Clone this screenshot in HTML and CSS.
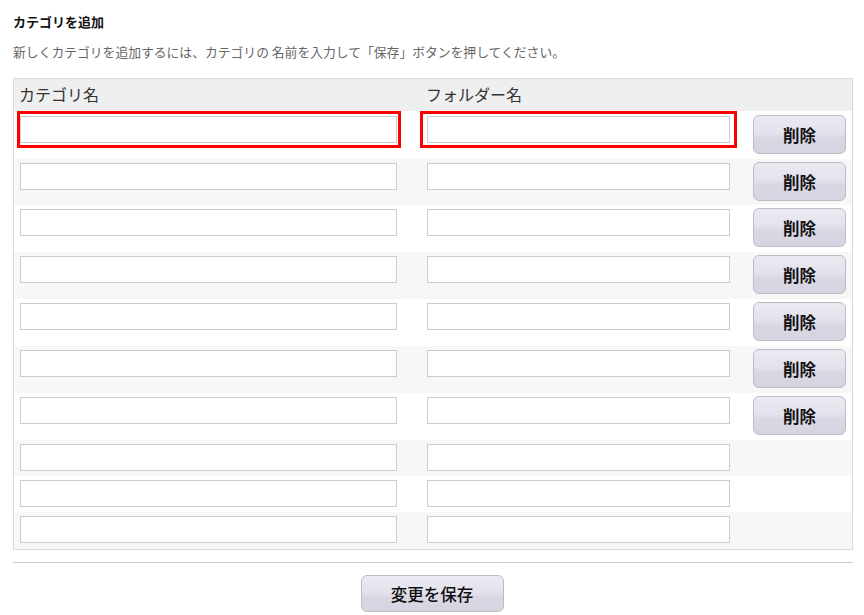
FILE: index.html
```html
<!DOCTYPE html>
<html lang="ja">
<head>
<meta charset="utf-8">
<title>カテゴリを追加</title>
<link rel="stylesheet" href="styles.css">
</head>
<body>
<div class="page">
  <h1 class="title">カテゴリを追加</h1>
  <p class="desc">新しくカテゴリを追加するには、カテゴリの 名前を入力して「保存」ボタンを押してください。</p>
  <div class="table">
    <div class="head">
      <div class="hcell c1">カテゴリ名</div>
      <div class="hcell c2">フォルダー名</div>
      <div class="hcell c3"></div>
    </div>
    <div class="row r-first">
      <div class="cell c1"><span class="hl hl1"><input class="field f1" type="text"></span></div>
      <div class="cell c2"><span class="hl hl2"><input class="field f2" type="text"></span></div>
      <div class="cell c3"><button class="btn del">削除</button></div>
    </div>
    <div class="row alt r-second">
      <div class="cell c1"><input class="field f1" type="text"></div>
      <div class="cell c2"><input class="field f2" type="text"></div>
      <div class="cell c3"><button class="btn del">削除</button></div>
    </div>
    <div class="row">
      <div class="cell c1"><input class="field f1" type="text"></div>
      <div class="cell c2"><input class="field f2" type="text"></div>
      <div class="cell c3"><button class="btn del">削除</button></div>
    </div>
    <div class="row alt">
      <div class="cell c1"><input class="field f1" type="text"></div>
      <div class="cell c2"><input class="field f2" type="text"></div>
      <div class="cell c3"><button class="btn del">削除</button></div>
    </div>
    <div class="row">
      <div class="cell c1"><input class="field f1" type="text"></div>
      <div class="cell c2"><input class="field f2" type="text"></div>
      <div class="cell c3"><button class="btn del">削除</button></div>
    </div>
    <div class="row alt">
      <div class="cell c1"><input class="field f1" type="text"></div>
      <div class="cell c2"><input class="field f2" type="text"></div>
      <div class="cell c3"><button class="btn del">削除</button></div>
    </div>
    <div class="row">
      <div class="cell c1"><input class="field f1" type="text"></div>
      <div class="cell c2"><input class="field f2" type="text"></div>
      <div class="cell c3"><button class="btn del">削除</button></div>
    </div>
    <div class="row short alt">
      <div class="cell c1"><input class="field f1" type="text"></div>
      <div class="cell c2"><input class="field f2" type="text"></div>
      <div class="cell c3"></div>
    </div>
    <div class="row short">
      <div class="cell c1"><input class="field f1" type="text"></div>
      <div class="cell c2"><input class="field f2" type="text"></div>
      <div class="cell c3"></div>
    </div>
    <div class="row short alt r-last">
      <div class="cell c1"><input class="field f1" type="text"></div>
      <div class="cell c2"><input class="field f2" type="text"></div>
      <div class="cell c3"></div>
    </div>
  </div>
  <hr class="rule">
  <div class="actions">
    <button class="btn save">変更を保存</button>
  </div>
</div>
</body>
</html>
```
FILE: styles.css
```css
html, body {
  margin: 0;
  padding: 0;
  background: #ffffff;
}
body {
  font-family: "Noto Sans CJK JP", "Noto Sans", sans-serif;
  color: #222;
}
.page {
  padding: 0 11px 0 13px;
}
.title {
  margin: 14px 0 0;
  font-size: 13px;
  line-height: 16px;
  height: 16px;
  font-weight: bold;
  color: #111;
}
.desc {
  margin: 14px 0 0;
  font-size: 12.8px;
  line-height: 16px;
  height: 16px;
  color: #666;
  white-space: nowrap;
}
.table {
  margin-top: 18px;
  border: 1px solid #d9d9d9;
  background: #fff;
}
.head, .row {
  display: grid;
  grid-template-columns: 407px 326px 1fr;
}
.head {
  height: 32px;
  background: #efefef;
  align-items: center;
}
.hcell {
  padding-left: 5px;
  padding-bottom: 2px;
  font-size: 16px;
  line-height: 20px;
  color: #333;
}
.row {
  height: 47px;
  align-items: start;
}
.row.alt {
  background: #f7f7f7;
}
.row.r-first { height: 48px; }
.row.r-second { height: 46px; }
.row.short { height: 36px; }
.row.r-last { height: 37px; }
.cell {
  padding-left: 6px;
  padding-top: 4px;
}
.cell.c3 {
  padding-top: 3px;
}
.r-first .cell { padding-top: 5px; }
.r-first .cell.c3 { padding-top: 4px; }
.field {
  display: block;
  box-sizing: border-box;
  height: 27px;
  margin: 0;
  padding: 0 4px;
  border: 1px solid #cccccc;
  background: #fff;
  font-family: inherit;
  font-size: 13px;
  outline: none;
}
.f1 { width: 377px; }
.f2 { width: 303px; }
.hl {
  position: relative;
  display: block;
  width: max-content;
}
.hl::after {
  content: "";
  position: absolute;
  border: 3px solid #ff0000;
  pointer-events: none;
}
.hl1::after {
  top: -5px;
  bottom: -5px;
  left: -3px;
  right: -4px;
}
.hl2::after {
  top: -5px;
  bottom: -5px;
  left: -7px;
  right: -7px;
}
.btn {
  display: block;
  box-sizing: border-box;
  margin: 0;
  padding: 0;
  border: 1px solid #bdbcc6;
  border-radius: 6px;
  background: linear-gradient(to bottom, #ebeaf2 0%, #e4e3ed 45%, #d9d7e4 60%, #d6d4e1 100%);
  font-family: inherit;
  color: #111;
  cursor: pointer;
}
.del {
  width: 93px;
  height: 39px;
  font-size: 16.5px;
  font-weight: bold;
}
.rule {
  margin: 12px 0 0;
  height: 0;
  border: 0;
  border-top: 1px solid #c3d0dc;
}
.actions {
  display: flex;
  justify-content: center;
  padding-top: 12px;
  margin-left: -13px;
  margin-right: -11px;
}
.save {
  width: 143px;
  height: 37px;
  font-size: 16.5px;
  font-weight: 500;
}
```
